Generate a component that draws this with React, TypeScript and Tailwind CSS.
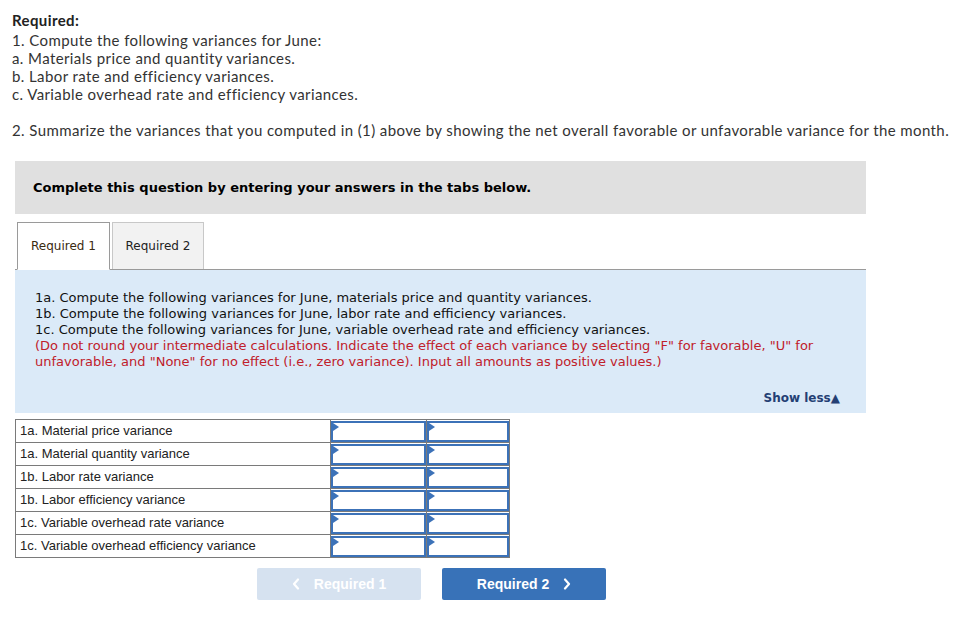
import React from 'react';

const rows = [
  '1a. Material price variance',
  '1a. Material quantity variance',
  '1b. Labor rate variance',
  '1b. Labor efficiency variance',
  '1c. Variable overhead rate variance',
  '1c. Variable overhead efficiency variance',
];

const InputCell: React.FC<{ w: string }> = ({ w }) => (
  <td className={`${w} border border-[#7a7a7a] p-0 h-[23px]`}>
    <div className="relative h-[21px] border-2 border-[#3c72b8] bg-white">
      <span className="absolute left-0 top-0 w-0 h-0 border-t-[4px] border-b-[4px] border-l-[6px] border-t-transparent border-b-transparent border-l-[#3c72b8]" />
    </div>
  </td>
);

const Chevron: React.FC<{ dir: 'left' | 'right' }> = ({ dir }) => (
  <svg width="8" height="12" viewBox="0 0 8 12" fill="none">
    <path
      d={dir === 'left' ? 'M6 1.5 L2 6 L6 10.5' : 'M2 1.5 L6 6 L2 10.5'}
      stroke="currentColor"
      strokeWidth="2.2"
      strokeLinecap="round"
      strokeLinejoin="round"
    />
  </svg>
);

export default function App() {
  return (
    <div className="w-[966px] h-[633px] bg-white text-[#222]">
      <div className="pl-3 pt-[11px] font-['Lato','Open_Sans',sans-serif] text-[15px] leading-[18px] tracking-[0.4px] text-[#333]">
        <div className="font-bold text-[#222] mb-[2px]">Required:</div>
        <div>1. Compute the following variances for June:</div>
        <div>a. Materials price and quantity variances.</div>
        <div>b. Labor rate and efficiency variances.</div>
        <div>c. Variable overhead rate and efficiency variances.</div>
        <div className="mt-[18px]">
          2. Summarize the variances that you computed in (1) above by showing the net overall favorable or unfavorable variance for the month.
        </div>
      </div>

      <div className="ml-[15px] w-[851px] mt-[22px] font-['DejaVu_Sans','Verdana',sans-serif]">
        <div className="h-[53px] bg-[#e0e0e0] flex items-center pl-[18px] text-[13px] font-bold text-black">
          Complete this question by entering your answers in the tabs below.
        </div>

        <div className="mt-2 flex items-end gap-[2px] pl-[2px] border-b border-[#9a9a9a] h-[48px]">
          <div className="w-[93px] h-[48px] -mb-px bg-white border border-[#9a9a9a] border-b-white flex items-center justify-center text-[12px] text-[#3a2a10]">
            Required 1
          </div>
          <div className="w-[92px] h-[47px] bg-[#f2f2f2] border border-[#c8c8c8] border-b-0 flex items-center justify-center text-[12px] text-[#222]">
            Required 2
          </div>
        </div>

        <div className="bg-[#dbeaf8] h-[143px] pl-5 pr-5 pt-[20px] text-[13px] leading-[16px]">
          <div className="text-[#111]">1a. Compute the following variances for June, materials price and quantity variances.</div>
          <div className="text-[#111]">1b. Compute the following variances for June, labor rate and efficiency variances.</div>
          <div className="text-[#111]">1c. Compute the following variances for June, variable overhead rate and efficiency variances.</div>
          <div className="text-[#c0202a]">
            (Do not round your intermediate calculations. Indicate the effect of each variance by selecting "F" for favorable, "U" for unfavorable, and "None" for no effect (i.e., zero variance). Input all amounts as positive values.)
          </div>
          <div className="flex justify-end mt-[20px] pr-[6px]">
            <span className="text-[12px] font-bold text-[#243f74]">Show less▲</span>
          </div>
        </div>
      </div>

      <table className="ml-[15px] mt-[6px] border-collapse font-['Liberation_Sans','Arial',sans-serif] text-[13px] text-[#222]">
        <tbody>
          {rows.map((r) => (
            <tr key={r}>
              <td className="w-[315px] h-[23px] border border-[#7a7a7a] pl-[4px] p-0">{r}</td>
              <InputCell w="w-[96px]" />
              <InputCell w="w-[83px]" />
            </tr>
          ))}
        </tbody>
      </table>

      <div className="flex gap-[21px] ml-[257px] mt-[10px] font-['Liberation_Sans','Arial',sans-serif] text-[14px] font-bold">
        <button className="w-[164px] h-[32px] rounded-[2px] bg-[#d6e2f0] text-white flex items-center justify-center gap-[14px]">
          <Chevron dir="left" />
          <span>Required 1</span>
        </button>
        <button className="w-[164px] h-[32px] rounded-[2px] bg-[#3872b8] text-white flex items-center justify-center gap-[14px]">
          <span>Required 2</span>
          <Chevron dir="right" />
        </button>
      </div>
    </div>
  );
}
